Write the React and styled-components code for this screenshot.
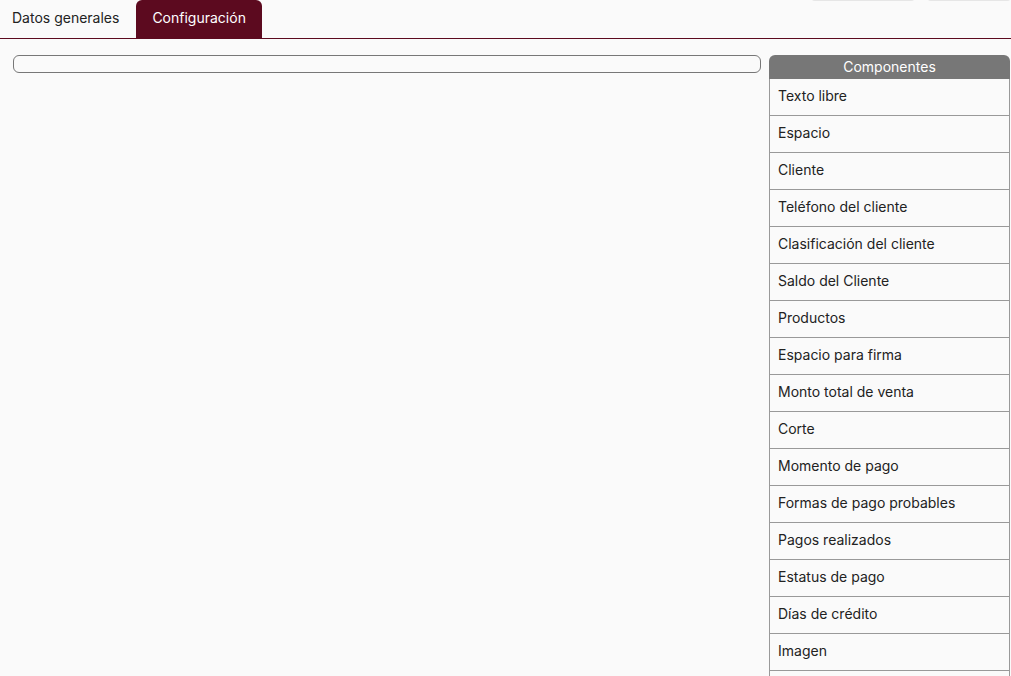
import React from 'react';
import styled, { createGlobalStyle } from 'styled-components';

const GlobalStyle = createGlobalStyle`
  body {
    margin: 0;
    background: #fafafa;
    font-family: Inter, 'Open Sans', 'Liberation Sans', sans-serif;
    color: #222;
  }
`;

const maroon = '#5c0a1f';

const Page = styled.div`
  position: relative;
  min-height: 676px;
`;

const TopButtons = styled.div`
  position: absolute;
  top: -30px;
  right: 0;
  display: flex;
  gap: 12px;
`;

const GhostButton = styled.div`
  width: ${p => p.w}px;
  height: 30px;
  border-bottom: 1px solid #e6e6e6;
  border-radius: 0 0 4px 4px;
`;

const TabBar = styled.div`
  display: flex;
  align-items: flex-end;
  height: 38px;
  border-bottom: 1px solid ${maroon};
`;

const Tab = styled.div`
  height: 38px;
  display: flex;
  align-items: center;
  justify-content: center;
  padding: 0 ${p => (p.active ? 16 : 17)}px 4px ${p => (p.active ? 16 : 12)}px;
  font-size: 14px;
  border-radius: 6px 6px 0 0;
  background: ${p => (p.active ? maroon : 'transparent')};
  color: ${p => (p.active ? '#fff' : '#222')};
  box-sizing: border-box;
`;

const Body = styled.div`
  display: flex;
  align-items: flex-start;
  gap: 8px;
  padding: 16px 1px 0 13px;
`;

const Canvas = styled.div`
  flex: 1;
  height: 16px;
  border: 1px solid #777;
  border-radius: 6px;
`;

const Panel = styled.div`
  width: 241px;
  flex-shrink: 0;
`;

const PanelHeader = styled.div`
  height: 24px;
  background: #777;
  color: #fff;
  font-size: 14px;
  display: flex;
  align-items: center;
  justify-content: center;
  padding-bottom: 2px;
  box-sizing: border-box;
  border-radius: 6px 6px 0 0;
`;

const Item = styled.div`
  height: 37px;
  box-sizing: border-box;
  border-left: 1px solid #999;
  border-right: 1px solid #999;
  border-bottom: 1px solid #999;
  padding: 0 8px 3px;
  display: flex;
  align-items: center;
  font-size: 14px;
  color: #222;
`;

const items = [
  'Texto libre',
  'Espacio',
  'Cliente',
  'Teléfono del cliente',
  'Clasificación del cliente',
  'Saldo del Cliente',
  'Productos',
  'Espacio para firma',
  'Monto total de venta',
  'Corte',
  'Momento de pago',
  'Formas de pago probables',
  'Pagos realizados',
  'Estatus de pago',
  'Días de crédito',
  'Imagen',
  '',
];

export default function App() {
  return (
    <Page>
      <GlobalStyle />
      <TopButtons>
        <GhostButton w={104} />
        <GhostButton w={84} />
      </TopButtons>
      <TabBar>
        <Tab>Datos generales</Tab>
        <Tab active>Configuración</Tab>
      </TabBar>
      <Body>
        <Canvas />
        <Panel>
          <PanelHeader>Componentes</PanelHeader>
          {items.map((it, i) => (
            <Item key={i}>{it}</Item>
          ))}
        </Panel>
      </Body>
    </Page>
  );
}
